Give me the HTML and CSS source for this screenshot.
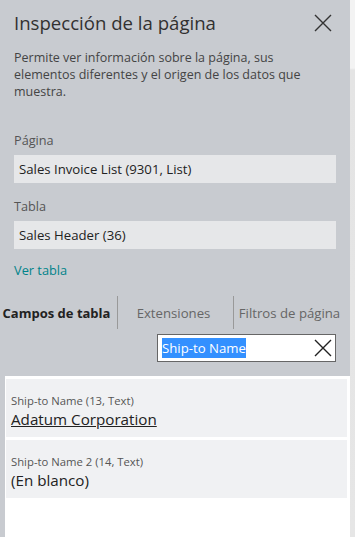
FILE: index.html
```html
<!DOCTYPE html>
<html lang="es">
<head>
<meta charset="utf-8">
<title>Inspección de la página</title>
<link rel="stylesheet" href="styles.css">
</head>
<body>
<div class="panel">
  <div class="header">
    <h1 class="title">Inspección de la página</h1>
    <button class="close" aria-label="Cerrar">
      <svg width="18" height="18" viewBox="0 0 18 18"><path d="M1 1L17 17M17 1L1 17" stroke="#333" stroke-width="1.4" fill="none"/></svg>
    </button>
  </div>
  <p class="desc">Permite ver información sobre la página, sus elementos diferentes y el origen de los datos que muestra.</p>
  <div class="field">
    <div class="label">Página</div>
    <div class="box">Sales Invoice List (9301, List)</div>
  </div>
  <div class="field second">
    <div class="label">Tabla</div>
    <div class="box">Sales Header (36)</div>
  </div>
  <a class="link" href="#">Ver tabla</a>
  <div class="tabs">
    <div class="tab active">Campos de tabla</div>
    <div class="tab">Extensiones</div>
    <div class="tab">Filtros de página</div>
  </div>
  <div class="search">
    <span class="sel">Ship-to Name</span>
    <svg class="clear" width="18" height="18" viewBox="0 0 18 18"><path d="M1 1L17 17M17 1L1 17" stroke="#222" stroke-width="1.4" fill="none"/></svg>
  </div>
  <div class="content">
    <div class="card">
      <div class="card-label">Ship-to Name (13, Text)</div>
      <div class="card-value"><a href="#">Adatum Corporation</a></div>
    </div>
    <div class="card">
      <div class="card-label">Ship-to Name 2 (14, Text)</div>
      <div class="card-value">(En blanco)</div>
    </div>
  </div>
</div>
<div class="strip"></div>
</body>
</html>
```
FILE: styles.css
```css
html, body {
  margin: 0;
  padding: 0;
}
body {
  width: 355px;
  height: 537px;
  overflow: hidden;
  display: flex;
  font-family: "Open Sans", "Noto Sans", sans-serif;
  background: #e6e6e6;
}
.panel {
  width: 350px;
  height: 537px;
  background: #c8cbd0;
  display: flex;
  flex-direction: column;
}
.strip {
  width: 5px;
  height: 537px;
  background: linear-gradient(#f3f3f3 0, #f3f3f3 68px, #e4e4e4 70px, #e6e6e6 100%);
}
.header {
  display: flex;
  justify-content: space-between;
  align-items: center;
  padding: 9px 18px 0 14px;
}
.title {
  margin: 0;
  font-weight: 400;
  font-size: 18.6px;
  line-height: 28px;
  color: #323130;
}
.close {
  border: 0;
  background: none;
  padding: 0;
  width: 18px;
  height: 18px;
  display: flex;
}
.desc {
  margin: 12px 14px 0 14px;
  font-size: 12.5px;
  line-height: 17px;
  color: #444;
}
.field {
  margin: 32px 14px 0 14px;
}
.field.second {
  margin-top: 15px;
}
.label {
  font-size: 12.7px;
  line-height: 17px;
  color: #555;
}
.box {
  margin-top: 6px;
  height: 28px;
  line-height: 28px;
  background: #e6e7e9;
  padding: 0 5px;
  font-size: 13.2px;
  color: #222;
}
.link {
  display: block;
  margin: 13px 14px 0 14px;
  font-size: 12.8px;
  line-height: 17px;
  color: #00838a;
  text-decoration: none;
}
.tabs {
  margin-top: 17px;
  display: grid;
  grid-template-columns: 117px 116px 116px;
  height: 33px;
}
.tab {
  display: flex;
  align-items: center;
  justify-content: center;
  font-size: 13.2px;
  color: #666;
  white-space: nowrap;
  padding-right: 4px;
}
.tab + .tab {
  border-left: 1px solid #999;
}
.tab.active {
  font-weight: 700;
  color: #222;
  font-size: 13px;
}
.search {
  margin: 5px 14px 0 auto;
  width: 170px;
  height: 26px;
  border: 1px solid #666;
  background: #fff;
  display: flex;
  align-items: center;
  justify-content: space-between;
  padding: 0 3px 0 4px;
}
.sel {
  background: #3390ff;
  color: #fff;
  font-size: 13.2px;
  line-height: 20px;
}
.content {
  margin: 14px 0 0 5px;
  flex: 1;
  background: #fff;
  padding: 3px 3px 0 1px;
  display: flex;
  flex-direction: column;
  gap: 3px;
}
.card {
  background: #f0f1f3;
  height: 58px;
  box-sizing: border-box;
  padding: 15px 5px 0 5px;
}
.card-label {
  font-size: 11.3px;
  line-height: 14px;
  color: #555;
}
.card-value {
  margin-top: 1px;
  font-size: 15.2px;
  line-height: 20px;
  color: #222;
}
.card-value a {
  color: #222;
  text-decoration: underline;
}
```
